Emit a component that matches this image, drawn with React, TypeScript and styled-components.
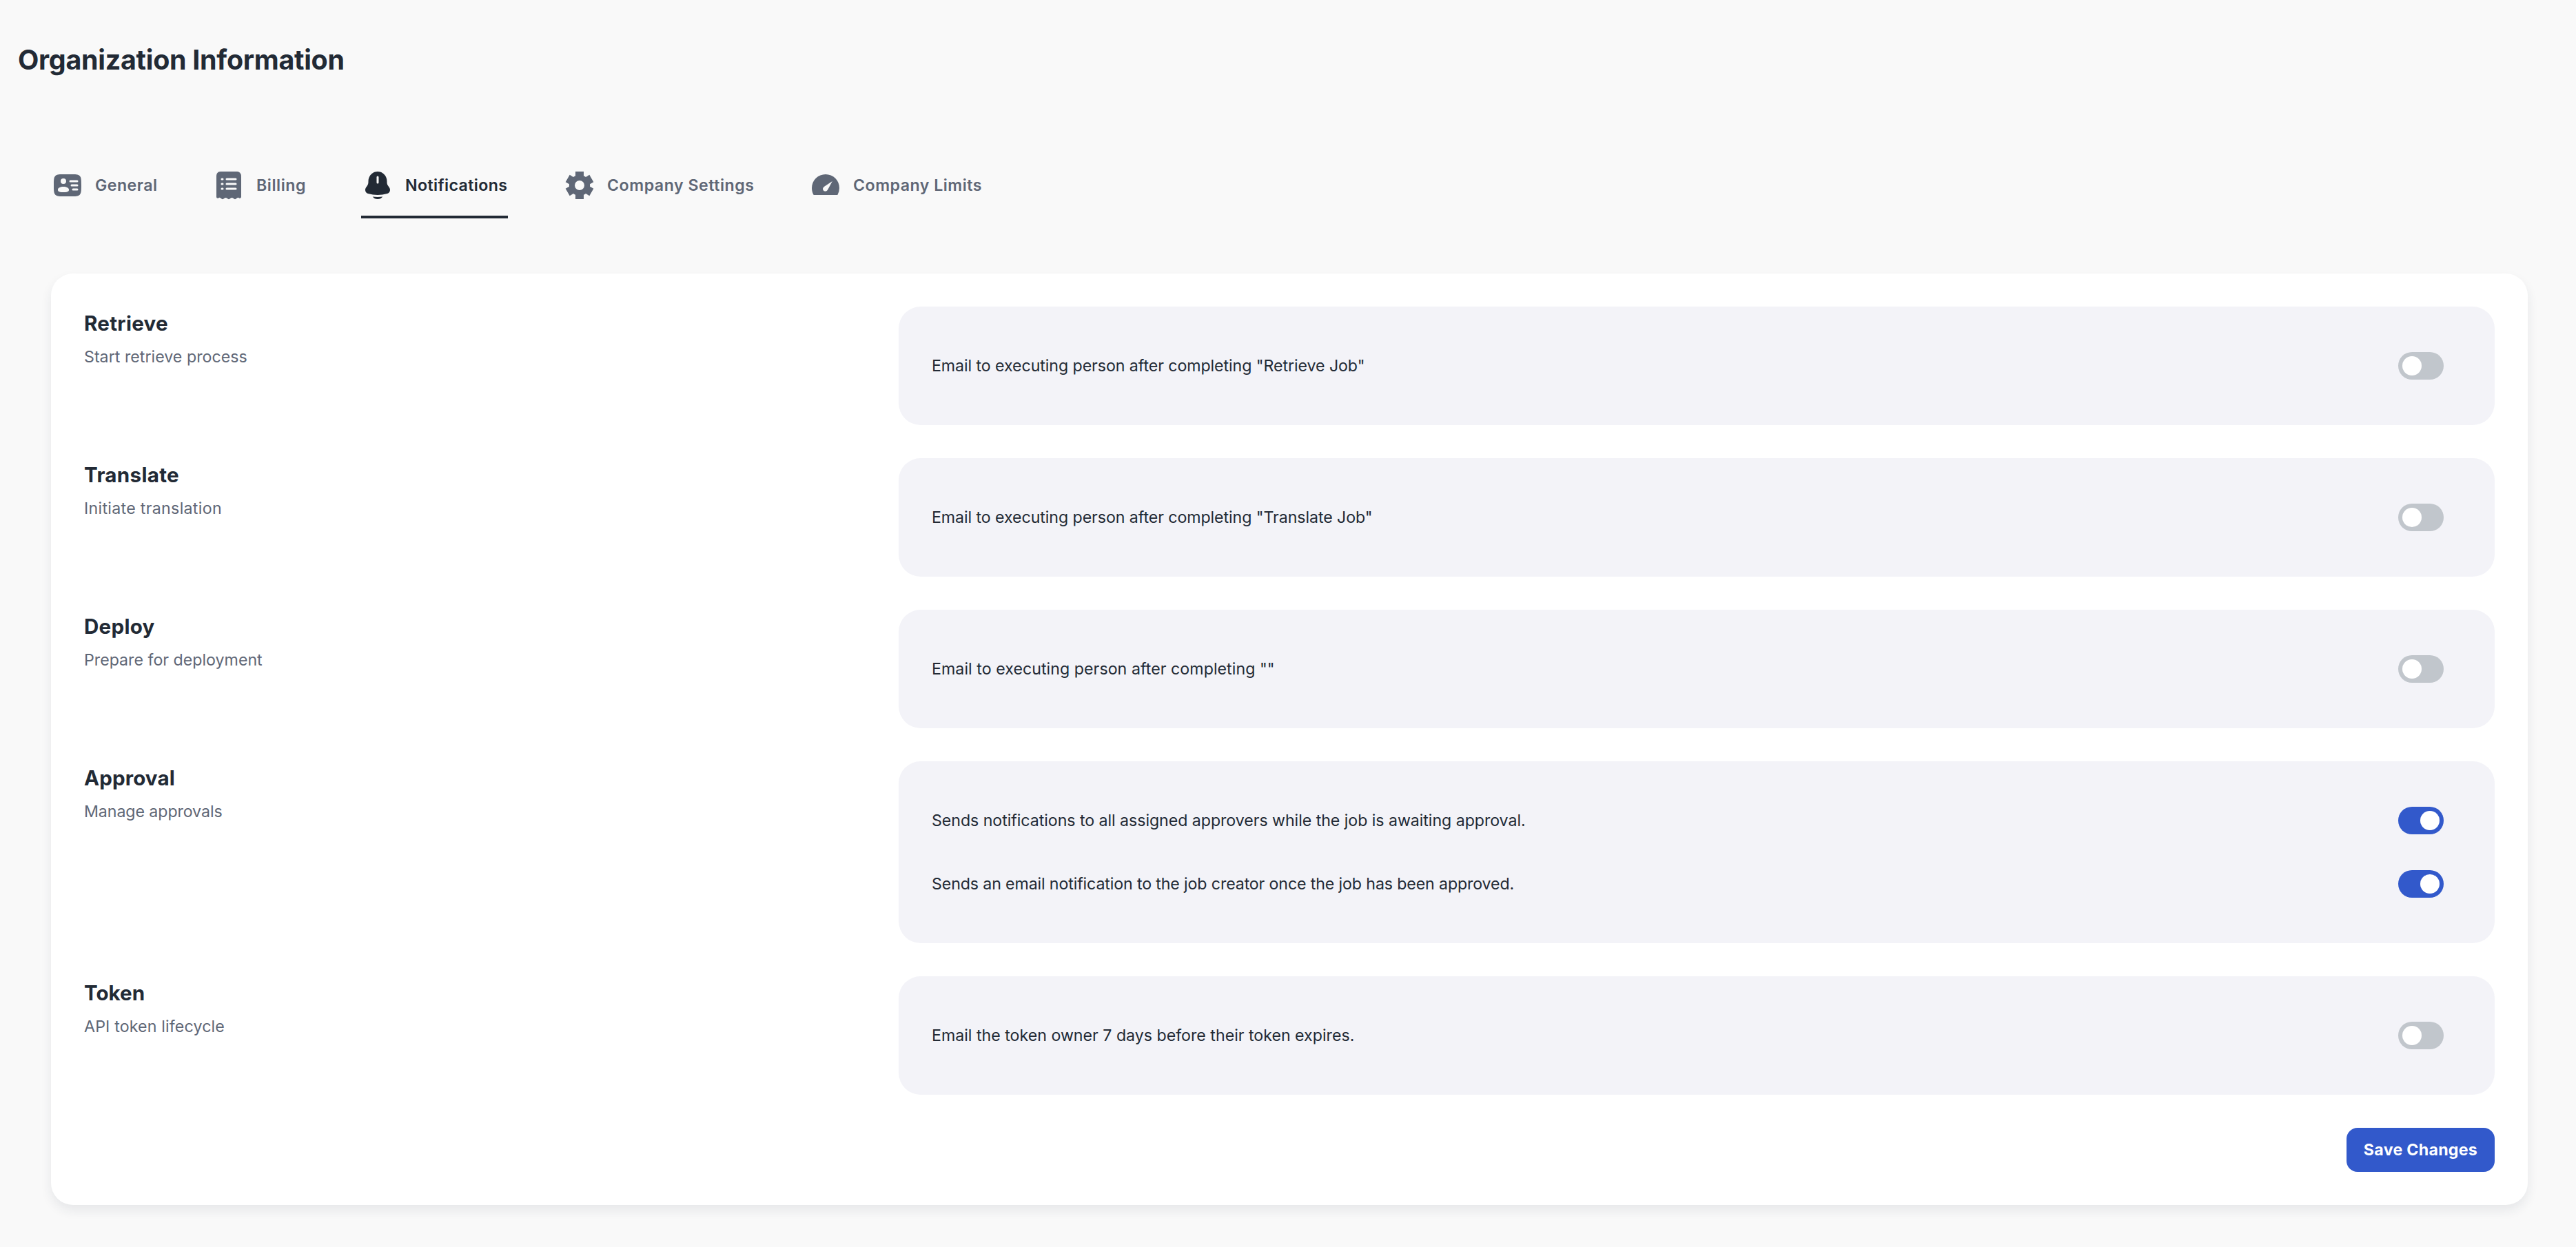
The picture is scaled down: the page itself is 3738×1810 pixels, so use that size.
import React, { useState } from "react";
import styled, { createGlobalStyle } from "styled-components";

const color = {
  page: "#f9f9f9",
  surface: "#ffffff",
  panel: "#f3f3f8",
  ink: "#222a35",
  muted: "#5f6776",
  primary: "#3259cb",
  off: "#c1c6cc",
};

const GlobalStyle = createGlobalStyle`
  *, *::before, *::after { box-sizing: border-box; }
  body {
    margin: 0;
    background: ${color.page};
    color: ${color.ink};
    font-family: Inter, "Liberation Sans", sans-serif;
    font-size: 23.2px;
  }
`;

const Page = styled.main`
  display: flex;
  flex-direction: column;
  min-height: 1810px;
  padding: 57px 70px 61px 26px;
`;

const PageTitle = styled.h1`
  margin: 0;
  font-size: 39.4px;
  line-height: 60px;
  font-weight: 700;
  letter-spacing: -0.278px;
`;

const Tabs = styled.nav`
  display: flex;
  gap: 80px;
  margin: 104px 0 0 48px;
`;

const Tab = styled.button<{ $active: boolean; $width: number; $track: number }>`
  display: flex;
  align-items: center;
  gap: 16px;
  width: ${(p) => p.$width}px;
  height: 96px;
  padding: 0;
  border: 0;
  background: none;
  box-shadow: ${(p) => (p.$active ? `inset 0 -4px 0 ${color.ink}` : "none")};
  color: ${(p) => (p.$active ? color.ink : color.muted)};
  font: inherit;
  font-weight: 600;
  letter-spacing: ${(p) => p.$track}px;
  white-space: nowrap;
  cursor: pointer;
`;

const Icon = styled.svg`
  flex: none;
  width: 48px;
  height: 48px;
  fill: currentColor;
`;

const Card = styled.section`
  display: flex;
  flex-direction: column;
  gap: 48px;
  margin: 80px 0 0 48px;
  padding: 48px;
  border-radius: 32px;
  background: ${color.surface};
  box-shadow: 0 8px 16px rgba(33, 43, 74, 0.085);
`;

const Group = styled.div`
  display: grid;
  grid-template-columns: 1134px 1fr;
  column-gap: 48px;
`;

const GroupTitle = styled.h2<{ $track: number }>`
  margin: 0 0 8px;
  font-size: 29.6px;
  line-height: 48px;
  font-weight: 700;
  letter-spacing: ${(p) => p.$track}px;
`;

const GroupNote = styled.p<{ $track: number }>`
  margin: 0;
  line-height: 35px;
  color: ${color.muted};
  letter-spacing: ${(p) => p.$track}px;
`;

const Panel = styled.div`
  display: flex;
  flex-direction: column;
  gap: 16px;
  padding: 48px 74px 48px 48px;
  border-radius: 32px;
  background: ${color.panel};
`;

const Row = styled.div`
  display: flex;
  align-items: center;
  justify-content: space-between;
  height: 76px;
`;

const RowLabel = styled.span<{ $track: number }>`
  letter-spacing: ${(p) => p.$track}px;
  white-space: nowrap;
`;

const Track = styled.button<{ $on: boolean }>`
  display: flex;
  align-items: center;
  justify-content: ${(p) => (p.$on ? "flex-end" : "flex-start")};
  width: 66px;
  height: 40px;
  padding: 6px;
  border: 0;
  border-radius: 20px;
  background: ${(p) => (p.$on ? color.primary : color.off)};
  cursor: pointer;
`;

const Thumb = styled.span`
  width: 28px;
  height: 28px;
  border-radius: 50%;
  background: #fff;
`;

const Actions = styled.div`
  display: flex;
  justify-content: flex-end;
`;

const SaveButton = styled.button`
  width: 215px;
  height: 64px;
  padding: 0;
  border: 0;
  border-radius: 16px;
  background: ${color.primary};
  color: #fff;
  font: inherit;
  font-weight: 700;
  letter-spacing: 0.274px;
  cursor: pointer;
`;

const icons = {
  general: (
    <path
      fillRule="evenodd"
      d="M14 4h-4C6.229 4 4.343 4 3.172 5.172C2 6.343 2 8.229 2 12s0 5.657 1.172 6.828C4.343 20 6.229 20 10 20h4c3.771 0 5.657 0 6.828-1.172C22 17.657 22 15.771 22 12s0-5.657-1.172-6.828C19.657 4 17.771 4 14 4m-.75 5a.75.75 0 0 1 .75-.75h5a.75.75 0 0 1 0 1.5h-5a.75.75 0 0 1-.75-.75m1 3a.75.75 0 0 1 .75-.75h4a.75.75 0 0 1 0 1.5h-4a.75.75 0 0 1-.75-.75m1 3a.75.75 0 0 1 .75-.75h3a.75.75 0 0 1 0 1.5h-3a.75.75 0 0 1-.75-.75M11 9a2 2 0 1 1-4 0a2 2 0 0 1 4 0m-2 8c4 0 4-.895 4-2s-1.79-2-4-2s-4 .895-4 2s0 2 4 2"
    />
  ),
  billing: (
    <path
      fillRule="evenodd"
      d="M7.245 2h9.51c1.159 0 1.738 0 2.206.163a3.05 3.05 0 0 1 1.881 1.936C21 4.581 21 5.177 21 6.37v14.004c0 .858-.985 1.314-1.608.744a.946.946 0 0 0-1.284 0l-.483.442a1.657 1.657 0 0 1-2.25 0a1.657 1.657 0 0 0-2.25 0a1.657 1.657 0 0 1-2.25 0a1.657 1.657 0 0 0-2.25 0a1.657 1.657 0 0 1-2.25 0l-.483-.442a.946.946 0 0 0-1.284 0c-.623.57-1.608.114-1.608-.744V6.37c0-1.193 0-1.79.158-2.27c.3-.913.995-1.65 1.881-1.937C5.507 2 6.086 2 7.245 2M7 6.75a.75.75 0 0 0 0 1.5h.5a.75.75 0 0 0 0-1.5zm3.5 0a.75.75 0 0 0 0 1.5H17a.75.75 0 0 0 0-1.5zM7 10.25a.75.75 0 0 0 0 1.5h.5a.75.75 0 0 0 0-1.5zm3.5 0a.75.75 0 0 0 0 1.5H17a.75.75 0 0 0 0-1.5zM7 13.75a.75.75 0 0 0 0 1.5h.5a.75.75 0 0 0 0-1.5zm3.5 0a.75.75 0 0 0 0 1.5H17a.75.75 0 0 0 0-1.5z"
    />
  ),
  notifications: (
    <path
      fillRule="evenodd"
      d="M8.352 20.242A4.63 4.63 0 0 0 12 22a4.63 4.63 0 0 0 3.648-1.758a27.2 27.2 0 0 1-7.296 0M18.75 9v.704c0 .845.24 1.671.692 2.374l1.108 1.723c1.011 1.574.239 3.713-1.52 4.21a25.8 25.8 0 0 1-14.06 0c-1.759-.497-2.531-2.636-1.52-4.21l1.108-1.723a4.4 4.4 0 0 0 .693-2.374V9c0-3.866 3.022-7 6.749-7s6.75 3.134 6.75 7M12.75 6a.75.75 0 0 0-1.5 0v4a.75.75 0 0 0 1.5 0z"
    />
  ),
  settings: (
    <path
      fillRule="evenodd"
      d="M9 2h6v3.07a7.5 7.5 0 0 1 1.5.87l2.66-1.54l3 5.2l-2.66 1.53a7.5 7.5 0 0 1 0 1.74l2.66 1.53l-3 5.2l-2.66-1.54a7.5 7.5 0 0 1-1.5.87V22H9v-3.07a7.5 7.5 0 0 1-1.5-.87L4.84 19.6l-3-5.2l2.66-1.53a7.5 7.5 0 0 1 0-1.74L1.84 9.6l3-5.2L7.5 5.94A7.5 7.5 0 0 1 9 5.07zM12 8.5a3.5 3.5 0 1 0 0 7a3.5 3.5 0 0 0 0-7"
    />
  ),
  limits: (
    <path
      fillRule="evenodd"
      d="M12 4A10 10 0 0 0 2 14c0 1.8.48 3.5 1.34 5h17.32A9.9 9.9 0 0 0 22 14A10 10 0 0 0 12 4M16.9 9l-3.3 6.1c-.5.9-1.3 1.4-2.2 1.2c-1.1-.2-1.7-1.4-1.2-2.4c.2-.4.5-.7.9-1z"
    />
  ),
};

type TabItem = { id: keyof typeof icons; label: string; width: number; track: number };

const tabs: TabItem[] = [
  { id: "general", label: "General", width: 154, track: 0.453 },
  { id: "billing", label: "Billing", width: 136, track: 0.542 },
  { id: "notifications", label: "Notifications", width: 213, track: 0.375 },
  { id: "settings", label: "Company Settings", width: 277, track: 0.515 },
  { id: "limits", label: "Company Limits", width: 251, track: 0.477 },
];

type Option = { id: string; label: string; track: number };
type GroupItem = { title: string; track: number; note: string; noteTrack: number; options: Option[] };

const groups: GroupItem[] = [
  {
    title: "Retrieve", track: 0.267, note: "Start retrieve process", noteTrack: 0.02,
    options: [{ id: "retrieve", label: 'Email to executing person after completing "Retrieve Job"', track: -0.08 }],
  },
  {
    title: "Translate", track: 0.3, note: "Initiate translation", noteTrack: 0.3,
    options: [{ id: "translate", label: 'Email to executing person after completing "Translate Job"', track: -0.08 }],
  },
  {
    title: "Deploy", track: 0.242, note: "Prepare for deployment", noteTrack: 0,
    options: [{ id: "deploy", label: 'Email to executing person after completing ""', track: 0.04 }],
  },
  {
    title: "Approval", track: 0.102, note: "Manage approvals", noteTrack: -0.087,
    options: [
      { id: "awaiting", label: "Sends notifications to all assigned approvers while the job is awaiting approval.", track: -0.059 },
      { id: "approved", label: "Sends an email notification to the job creator once the job has been approved.", track: -0.135 },
    ],
  },
  {
    title: "Token", track: 0, note: "API token lifecycle", noteTrack: 0.15,
    options: [{ id: "token", label: "Email the token owner 7 days before their token expires.", track: -0.01 }],
  },
];

export default function App() {
  const [active, setActive] = useState<string>("notifications");
  const [enabled, setEnabled] = useState<Record<string, boolean>>({ awaiting: true, approved: true });

  return (
    <>
      <GlobalStyle />
      <Page>
        <PageTitle>Organization Information</PageTitle>
        <Tabs>
          {tabs.map((t) => (
            <Tab key={t.id} $active={t.id === active} $width={t.width} $track={t.track} onClick={() => setActive(t.id)}>
              <Icon viewBox="0 0 24 24">{icons[t.id]}</Icon>
              {t.label}
            </Tab>
          ))}
        </Tabs>
        <Card>
          {groups.map((g) => (
            <Group key={g.title}>
              <div>
                <GroupTitle $track={g.track}>{g.title}</GroupTitle>
                <GroupNote $track={g.noteTrack}>{g.note}</GroupNote>
              </div>
              <Panel>
                {g.options.map((o) => (
                  <Row key={o.id}>
                    <RowLabel $track={o.track}>{o.label}</RowLabel>
                    <Track
                      role="switch"
                      aria-checked={!!enabled[o.id]}
                      $on={!!enabled[o.id]}
                      onClick={() => setEnabled((e) => ({ ...e, [o.id]: !e[o.id] }))}
                    >
                      <Thumb />
                    </Track>
                  </Row>
                ))}
              </Panel>
            </Group>
          ))}
          <Actions>
            <SaveButton>Save Changes</SaveButton>
          </Actions>
        </Card>
      </Page>
    </>
  );
}
